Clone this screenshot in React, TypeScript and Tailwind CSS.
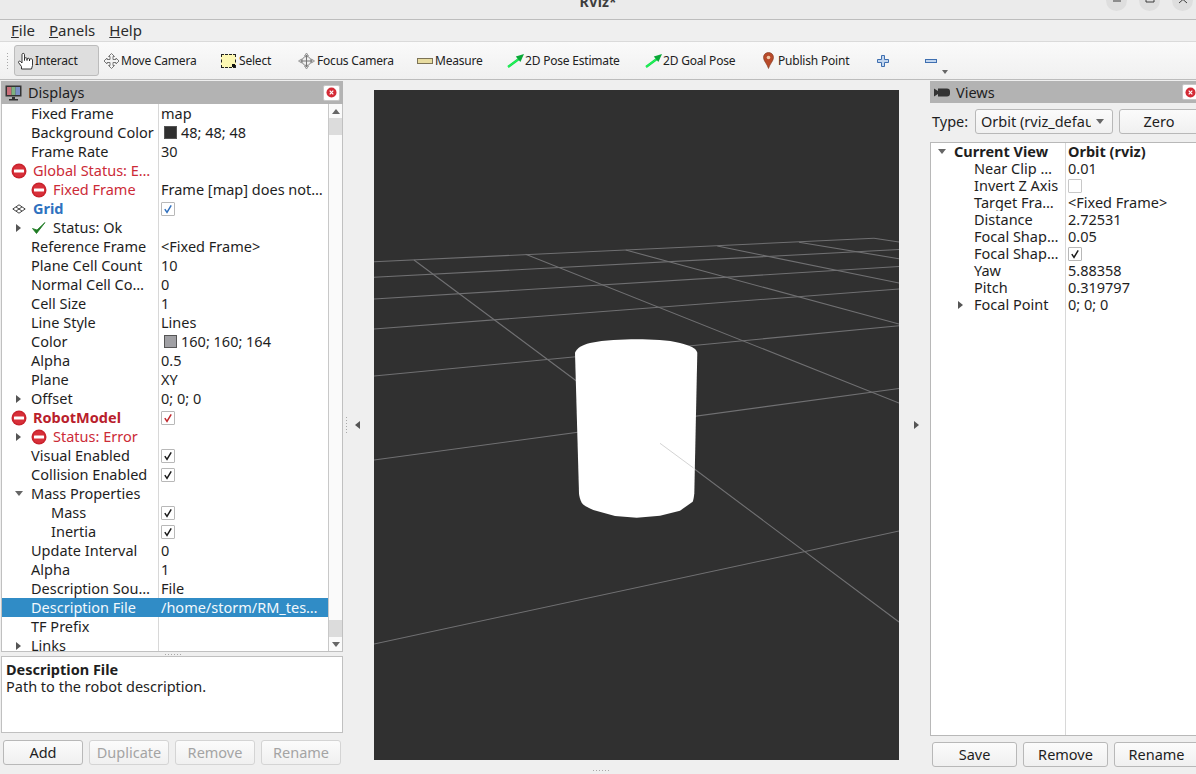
import type { ReactNode } from "react";

const sans = "font-['Noto_Sans',sans-serif]";

function ErrorDot() {
  return (
    <svg width="16" height="16" viewBox="0 0 16 16" className="shrink-0">
      <circle cx="8" cy="8" r="7.5" fill="#c9232d" />
      <circle cx="8" cy="8" r="6" fill="#d8303a" />
      <rect x="3" y="6.5" width="10" height="3" rx="0.5" fill="#fff" />
    </svg>
  );
}

function CloseBtn() {
  return (
    <div className="w-[17px] h-[16px] bg-white border border-[#c8c8c8] rounded-[2px] flex items-center justify-center shrink-0">
      <svg width="11" height="11" viewBox="0 0 11 11">
        <circle cx="5.5" cy="5.5" r="5" fill="#d42a35" />
        <path d="M3.7 3.7l3.6 3.6M7.3 3.7L3.7 7.3" stroke="#fff" strokeWidth="1.2" />
      </svg>
    </div>
  );
}

function ArrowRight() {
  return (
    <svg width="5" height="8" viewBox="0 0 5 8" className="shrink-0">
      <path d="M0 0l5 4-5 4z" fill="#555" />
    </svg>
  );
}

function ArrowDown() {
  return (
    <svg width="8" height="5" viewBox="0 0 8 5" className="shrink-0">
      <path d="M0 0h8L4 5z" fill="#666" />
    </svg>
  );
}

function Check({ color = "#1a1a1a", on = true, border = "border-[#b8b8b8]" }: { color?: string; on?: boolean; border?: string }) {
  return (
    <div className={"w-[14px] h-[14px] bg-white border rounded-[1px] flex items-center justify-center " + border}>
      {on && (
        <svg width="10" height="10" viewBox="0 0 10 10">
          <path d="M1.8 5.2L4 8.4 8.2 1.4" fill="none" stroke={color} strokeWidth="1.5" />
        </svg>
      )}
    </div>
  );
}

function Swatch({ color }: { color: string }) {
  return <div className={"w-[13px] h-[13px] border border-[#555] mr-[4px] ml-[3px] shrink-0 " + color} />;
}

type Row = {
  label: string;
  value?: ReactNode;
  labelClass?: string;
  gutter?: boolean;
  arrow?: "right" | "down";
  icon?: ReactNode;
  pad?: string;
  selected?: boolean;
};

const displayRows: Row[] = [
  { label: "Fixed Frame", value: "map", gutter: true },
  { label: "Background Color", value: <><Swatch color="bg-[#303030]" />48; 48; 48</>, gutter: true },
  { label: "Frame Rate", value: "30", gutter: true },
  { label: "Global Status: E…", icon: <ErrorDot />, pad: "pl-[9px]", labelClass: "text-[#cc2b37]" },
  { label: "Fixed Frame", value: "Frame [map] does not…", icon: <ErrorDot />, gutter: true, labelClass: "text-[#cc2b37]" },
  {
    label: "Grid",
    value: <Check color="#2f6fbe" />,
    pad: "pl-[10px]",
    labelClass: "font-bold text-[#2f72c0]",
    icon: (
      <svg width="14" height="10" viewBox="0 0 14 10" className="shrink-0 mr-[1px]">
        <path d="M7 .8L13.2 5 7 9.2.8 5zM4 2.9L10 7.1M10 2.9L4 7.1" fill="none" stroke="#444" strokeWidth="1" />
      </svg>
    ),
  },
  {
    label: "Status: Ok",
    gutter: true,
    arrow: "right",
    icon: (
      <svg width="16" height="16" viewBox="0 0 16 16" className="shrink-0">
        <path d="M1.5 8.5L5.5 13.5 14 2.5 6 10z" fill="#1d7a22" stroke="#1d7a22" strokeWidth="0.8" />
      </svg>
    ),
  },
  { label: "Reference Frame", value: "<Fixed Frame>", gutter: true },
  { label: "Plane Cell Count", value: "10", gutter: true },
  { label: "Normal Cell Co…", value: "0", gutter: true },
  { label: "Cell Size", value: "1", gutter: true },
  { label: "Line Style", value: "Lines", gutter: true },
  { label: "Color", value: <><Swatch color="bg-[#a0a0a4]" />160; 160; 164</>, gutter: true },
  { label: "Alpha", value: "0.5", gutter: true },
  { label: "Plane", value: "XY", gutter: true },
  { label: "Offset", value: "0; 0; 0", gutter: true, arrow: "right" },
  { label: "RobotModel", value: <Check color="#c0272d" />, icon: <ErrorDot />, pad: "pl-[9px]", labelClass: "font-bold text-[#b9202b]" },
  { label: "Status: Error", gutter: true, arrow: "right", icon: <ErrorDot />, labelClass: "text-[#cc2b37]" },
  { label: "Visual Enabled", value: <Check />, gutter: true },
  { label: "Collision Enabled", value: <Check />, gutter: true },
  { label: "Mass Properties", gutter: true, arrow: "down" },
  { label: "Mass", value: <Check />, gutter: true, pad: "pl-[20px]" },
  { label: "Inertia", value: <Check />, gutter: true, pad: "pl-[20px]" },
  { label: "Update Interval", value: "0", gutter: true },
  { label: "Alpha", value: "1", gutter: true },
  { label: "Description Sou…", value: "File", gutter: true },
  { label: "Description File", value: "/home/storm/RM_tes…", gutter: true, selected: true },
  { label: "TF Prefix", gutter: true },
  { label: "Links", gutter: true, arrow: "right" },
];

const viewRows: { label: string; value: ReactNode; arrow?: boolean }[] = [
  { label: "Near Clip …", value: "0.01" },
  { label: "Invert Z Axis", value: <Check on={false} border="border-[#c8c8c8]" /> },
  { label: "Target Fra…", value: "<Fixed Frame>" },
  { label: "Distance", value: "2.72531" },
  { label: "Focal Shap…", value: "0.05" },
  { label: "Focal Shap…", value: <Check /> },
  { label: "Yaw", value: "5.88358" },
  { label: "Pitch", value: "0.319797" },
  { label: "Focal Point", value: "0; 0; 0", arrow: true },
];

function DisplayRow({ row }: { row: Row }) {
  const text = row.selected ? "bg-[#308cc6] text-[#f2f8fc]" : "text-[#1e1e1e]";
  return (
    <div className={"flex h-[19px] items-center whitespace-nowrap " + text}>
      <div className={"w-[156px] h-full flex items-center shrink-0 overflow-hidden " + (row.pad ?? "")}>
        {row.gutter && (
          <div className="w-[29px] flex items-center pl-[14px] shrink-0">
            {row.arrow === "right" && <ArrowRight />}
            {row.arrow === "down" && <div className="-ml-[1px]"><ArrowDown /></div>}
          </div>
        )}
        {row.icon && <div className="mr-[6px] shrink-0">{row.icon}</div>}
        <span className={row.selected ? "" : row.labelClass}>{row.label}</span>
      </div>
      <div className={"h-full border-l flex-1 flex items-center pl-[2px] overflow-hidden " + (row.selected ? "border-[#308cc6]" : "border-[#d8d8d8]")}>
        {row.value}
      </div>
    </div>
  );
}

function Btn({ label, disabled, w }: { label: string; disabled?: boolean; w: string }) {
  return (
    <div
      className={
        "h-[25px] flex items-center justify-center rounded-[3px] border shrink-0 bg-gradient-to-b from-[#fbfbfb] to-[#f0f0f0] " +
        w +
        (disabled ? " border-[#d4d4d4] text-[#a4a4a4]" : " border-[#b8b8b8] text-[#1e1e1e]")
      }
    >
      {label}
    </div>
  );
}

function Dots({ vertical }: { vertical?: boolean }) {
  return (
    <div className={"flex gap-[2px] " + (vertical ? "flex-col" : "")}>
      {[0, 1, 2, 3, 4, 5].map((i) => (
        <div key={i} className="w-px h-px bg-[#a8a8a8]" />
      ))}
    </div>
  );
}

function Tool({ w, icon, label, gap = "ml-[1px]" }: { w: string; icon: ReactNode; label?: string; gap?: string }) {
  return (
    <div className={"flex items-center h-full shrink-0 " + w}>
      {icon}
      {label && <span className={gap}>{label}</span>}
    </div>
  );
}

const greenArrow = (
  <svg width="18" height="15" viewBox="0 0 18 15" className="shrink-0">
    <path d="M1 14L12.5 5.5" stroke="#12e04a" strokeWidth="2.4" />
    <path d="M17 1L8.8 3.6l4.6 5.4z" fill="#0aa838" />
    <path d="M1 14L11 6.5" stroke="#25f55c" strokeWidth="1" />
  </svg>
);

function Toolbar() {
  return (
    <div className="h-[38px] shrink-0 flex items-center border-b border-[#bcbcbc] bg-gradient-to-b from-[#fafafa] to-[#f0f0f0] text-[12px] tracking-[-0.2px] text-[#222] pl-[7px]">
      <div className="flex gap-[2px] w-[7px] shrink-0">
        <Dots vertical />
      </div>
      <div className="w-[85px] h-[31px] shrink-0 flex items-center pl-[2px] bg-[#dedede] border border-[#bcbcbc] rounded-[3px]">
        <svg width="18" height="18" viewBox="0 0 18 18" className="shrink-0">
          <path
            d="M4.500 17V14.500L1.500 10.500C1 9.500 2.500 8.500 3.500 9.500L5 11V2.500C5 1 7.500 1 7.500 2.500V8.500V6.500C7.500 5.500 10 5.500 10 6.500V8.500V7C10 6 12.500 6 12.500 7V9V7.500C12.500 6.500 15.500 6.500 15.500 7.500V13.500L14.500 17Z"
            fill="#fff"
            stroke="#222"
            strokeWidth="0.9"
          />
        </svg>
        <span>Interact</span>
      </div>
      <div className="w-[4px] shrink-0" />
      <Tool
        w="w-[118px]"
        icon={
          <svg width="17" height="16" viewBox="0 0 17 16" className="shrink-0">
            <path d="M8.500.5l3 3H10v3h3V5l3 3-3 3V9.500h-3v3h1.500l-3 3-3-3H7v-3H4V11L1 8l3-3v1.500h3v-3H5.500z" fill="#f4f4f4" stroke="#777" strokeWidth="1" />
          </svg>
        }
        label="Move Camera"
      />
      <Tool
        w="w-[77px]"
        icon={
          <div className="w-[15px] h-[14px] bg-[#fdf8b4] border border-dashed border-[#222] shrink-0 flex items-end justify-end">
            <div className="w-[3px] h-[3px] bg-[#111]" />
          </div>
        }
        label="Select"
        gap="ml-[3px]"
      />
      <Tool
        w="w-[119px]"
        icon={
          <svg width="17" height="18" viewBox="0 0 17 18" className="shrink-0">
            <circle cx="8.500" cy="9" r="4.500" fill="#eee" stroke="#888" />
            <path d="M8.500 1l2 3h-4zM8.500 17l2-3h-4zM.5 9l3-2v4zM16.500 9l-3-2v4z" fill="#ddd" stroke="#888" strokeWidth="0.8" />
            <path d="M8.500 3v12M2.500 9h12" stroke="#777" />
          </svg>
        }
        label="Focus Camera"
        gap="ml-[2px]"
      />
      <Tool
        w="w-[90px]"
        icon={<div className="w-[16px] h-[6px] bg-[#e8dca0] border border-[#7c7356] shrink-0" />}
        label="Measure"
        gap="ml-[2px]"
      />
      <Tool w="w-[138px]" icon={greenArrow} label="2D Pose Estimate" gap="ml-0" />
      <Tool w="w-[118px]" icon={greenArrow} label="2D Goal Pose" gap="ml-0" />
      <Tool
        w="w-[114px]"
        icon={
          <svg width="11" height="17" viewBox="0 0 11 17" className="shrink-0">
            <path d="M5.500.5C2.500.5.5 2.700.5 5.500c0 3.500 3.500 6 5 11 1.500-5 5-7.500 5-11C10.500 2.700 8.500.5 5.500.5z" fill="#b84a2a" stroke="#7e3a22" strokeWidth="0.6" />
            <circle cx="5.500" cy="5.500" r="1.800" fill="#f0c9a8" />
          </svg>
        }
        label="Publish Point"
        gap="ml-[4px]"
      />
      <Tool
        w="w-[48px]"
        icon={
          <svg width="12" height="12" viewBox="0 0 12 12">
            <path d="M4.500.5h3v4h4v3h-4v4h-3v-4h-4v-3h4z" fill="#c2d6ef" stroke="#3f6fb0" />
          </svg>
        }
      />
      <div className="w-[12px] h-[4px] bg-[#c2d6ef] border border-[#3f6fb0] shrink-0" />
      <div className="ml-[5px] mt-[23px]">
        <svg width="6" height="4" viewBox="0 0 6 4"><path d="M0 0h6L3 4z" fill="#666" /></svg>
      </div>
    </div>
  );
}

function Scene() {
  const lines = [
    "374,261.7 874,238.3",
    "374,277.3 899,249.500",
    "374,299 899,266.500",
    "374,329 899,289",
    "374,376 899,325.800",
    "374,460 899,388.500",
    "374,644 804,551.700 899,531",
    "414,260 660,443.300 899,622",
    "525.700,254.300 899,403",
    "625.700,250 899,324",
    "717.300,246 899,283",
    "799,242.300 899,258.700",
    "874,238.300 899,242",
  ];
  return (
    <svg viewBox="374 90 525 670" className="w-[525px] h-[670px] block bg-[#303030]">
      {lines.map((p) => (
        <polyline key={p} points={p} fill="none" stroke="#707072" strokeWidth="1.1" />
      ))}
      <path
        d="M575 352.700C577 348 582 345 590 343C605 340 622 339.300 636.700 339.300C652 339.300 668 340 680 343C690 345.500 696 348 697.300 352.700L694.300 493.300C694 497 693.500 499.500 692.700 501.700L680 510.700L660 515.700L636.700 517.700L615 516L593.300 510C587 507 583 505 581.700 502.700C580 499 579.300 497 579 493.300Z"
        fill="#fff"
      />
      <line x1="660" y1="443.300" x2="693.500" y2="468" stroke="#d4d4d4" strokeWidth="1" />
    </svg>
  );
}

export default function App() {
  return (
    <div className={"w-[1196px] h-[774px] overflow-hidden flex flex-col bg-[#efefef] text-[14.5px] leading-[17px] " + sans}>
      {/* window title */}
      <div className="h-[20px] shrink-0 relative bg-[#ebebeb] border-b border-[#bdbdbd] overflow-hidden">
        <div className="text-center font-bold text-[#3d3d3d] text-[14px] leading-[15px] -mt-[6px]">RViz*</div>
        <div className="absolute right-[3px] -top-[10px] flex gap-[12px]">
          {["M7 11h8", "M7 6h8v6H7z", "M7 6l8 7M15 6l-8 7"].map((d) => (
            <div key={d} className="w-[21px] h-[21px] rounded-full bg-[#dedede]">
              <svg width="21" height="21" viewBox="0 0 21 21">
                <path d={d} fill="none" stroke="#3d3d3d" strokeWidth="1" />
              </svg>
            </div>
          ))}
        </div>
      </div>

      {/* menu */}
      <div className="h-[22px] shrink-0 flex items-center gap-[14px] pl-[11px] border-b border-[#dadada] text-[15px] text-[#2c2c2c]">
        <span><span className="underline">F</span>ile</span>
        <span><span className="underline">P</span>anels</span>
        <span><span className="underline">H</span>elp</span>
      </div>

      <Toolbar />

      <div className="flex-1 flex min-h-0 relative">
        {/* displays panel */}
        <div className="w-[343px] shrink-0 flex flex-col pt-px">
          <div className="h-[23px] shrink-0 ml-px bg-[#b3b3b3] flex items-center justify-between pr-[3px] pl-[4px]">
            <div className="flex items-center gap-[6px] text-[#1e1e1e]">
              <svg width="17" height="16" viewBox="0 0 17 16" className="shrink-0">
                <rect x="0.500" y="0.500" width="16" height="11" fill="#333" />
                <rect x="2" y="2" width="4.500" height="8" fill="#c96f7a" />
                <rect x="6.500" y="2" width="4" height="8" fill="#7fb27f" />
                <rect x="10.500" y="2" width="4.500" height="8" fill="#7a8fc4" />
                <path d="M7 12h3v2H7zM4 14h9v1.500H4z" fill="#333" />
              </svg>
              Displays
            </div>
            <CloseBtn />
          </div>
          <div className="h-[548px] shrink-0 ml-px flex bg-white border-x border-b border-[#c0c0c0] overflow-hidden">
            <div className="flex-1 min-w-0">
              {displayRows.map((r, i) => (
                <DisplayRow key={i} row={r} />
              ))}
            </div>
            <div className="w-[14px] shrink-0 flex flex-col border-l border-[#c8c8c8] bg-[#fafafa]">
              <div className="h-[14px] flex items-center justify-center">
                <svg width="8" height="5" viewBox="0 0 8 5"><path d="M4 0l4 5H0z" fill="#666" /></svg>
              </div>
              <div className="h-[17px] bg-[#dcdcdc]" />
              <div className="flex-1" />
              <div className="h-[17px] bg-[#dcdcdc]" />
              <div className="h-[14px] flex items-center justify-center">
                <ArrowDown />
              </div>
            </div>
          </div>
          <div className="h-[4px] shrink-0 flex items-center justify-center pl-[2px]">
            <Dots />
          </div>
          <div className="h-[77px] shrink-0 ml-px bg-white border border-[#c0c0c0] px-[4px] pt-[4px] text-[#1e1e1e]">
            <div className="font-bold">Description File</div>
            <div>Path to the robot description.</div>
          </div>
          <div className="flex gap-[6px] pl-[3px] pt-[7px]">
            <Btn label="Add" w="w-[80px]" />
            <Btn label="Duplicate" disabled w="w-[80px]" />
            <Btn label="Remove" disabled w="w-[80px]" />
            <Btn label="Rename" disabled w="w-[80px]" />
          </div>
        </div>

        {/* left splitter */}
        <div className="w-[31px] shrink-0 flex items-center pl-[3px] pb-[4px]">
          <Dots vertical />
          <div className="ml-[8px]">
            <svg width="5" height="8" viewBox="0 0 5 8"><path d="M5 0L0 4l5 4z" fill="#555" /></svg>
          </div>
        </div>

        {/* 3d view */}
        <div className="w-[525px] shrink-0 pt-[10px]">
          <Scene />
          <div className="flex pl-[219px] pt-[10px]">
            <Dots />
          </div>
        </div>

        {/* right splitter */}
        <div className="w-[31px] shrink-0 flex items-center pl-[15px] pb-[4px]">
          <ArrowRight />
        </div>

        {/* views panel */}
        <div className="w-[272px] shrink-0 flex flex-col pt-px text-[#1e1e1e]">
          <div className="h-[22px] shrink-0 bg-[#b3b3b3] flex items-center justify-between pr-[3px] pl-[4px]">
            <div className="flex items-center gap-[6px]">
              <svg width="16" height="9" viewBox="0 0 16 9" className="shrink-0">
                <path d="M0 .5l4 2.500V.5h0 9a3 3 0 0 1 3 3v2a3 3 0 0 1-3 3H4V6l-4 2.500z" fill="#333" />
              </svg>
              Views
            </div>
            <CloseBtn />
          </div>
          <div className="h-[25px] mt-[6px] shrink-0 flex items-center pl-[2px]">
            <span className="w-[43px] shrink-0">Type:</span>
            <div className="w-[138px] h-[25px] shrink-0 flex items-center justify-between pl-[5px] pr-[8px] bg-gradient-to-b from-[#fbfbfb] to-[#f0f0f0] border border-[#b8b8b8] rounded-[3px]">
              <span className="w-[110px] overflow-hidden whitespace-nowrap">Orbit (rviz_defau</span>
              <ArrowDown />
            </div>
            <div className="ml-[6px]"><Btn label="Zero" w="w-[80px]" /></div>
          </div>
          <div className="h-[594px] mt-[8px] shrink-0 flex bg-white border border-[#b8b8b8] whitespace-nowrap">
            <div className="w-[135px] shrink-0 border-r border-[#d8d8d8]">
              <div className="h-[17px] flex items-center pl-[7px] font-bold">
                <ArrowDown />
                <span className="ml-[8px]">Current View</span>
              </div>
              {viewRows.map((r, i) => (
                <div key={i} className="h-[17px] flex items-center pl-[27px] overflow-hidden">
                  <div className="w-[16px] shrink-0 flex">
                    {r.arrow && <ArrowRight />}
                  </div>
                  {r.label}
                </div>
              ))}
            </div>
            <div className="flex-1 pl-[2px]">
              <div className="h-[17px] flex items-center font-bold">Orbit (rviz)</div>
              {viewRows.map((r, i) => (
                <div key={i} className="h-[17px] flex items-center">
                  {r.value}
                </div>
              ))}
            </div>
          </div>
          <div className="flex gap-[6px] pl-[2px] pt-[6px]">
            <Btn label="Save" w="w-[85px]" />
            <Btn label="Remove" w="w-[85px]" />
            <Btn label="Rename" w="w-[85px]" />
          </div>
        </div>
      </div>
    </div>
  );
}
